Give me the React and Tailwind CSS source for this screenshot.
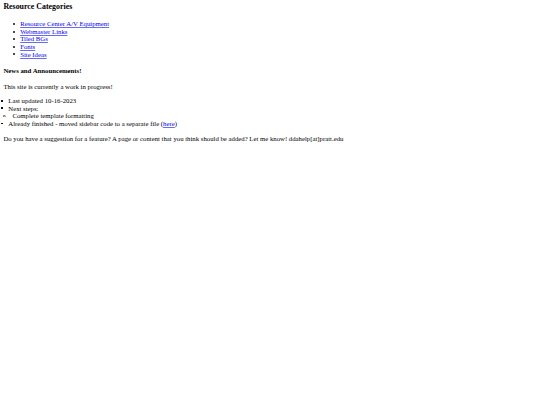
import React from "react";

const links = [
  "Resource Center A/V Equipment",
  "Webmaster Links",
  "Tiled BGs",
  "Fonts",
  "Site Ideas",
];

const Disc = () => <span className="mr-[5.2px] h-[2px] w-[2px] shrink-0 rounded-full bg-[#111]" />;
const Square = () => <span className="mr-[5.2px] h-[1.8px] w-[1.8px] shrink-0 bg-[#111]" />;
const Circle = () => (
  <svg className="mr-[6.9px] shrink-0" width="2.6" height="2.6" viewBox="0 0 24 24">
    <circle cx="12" cy="12" r="9" fill="none" stroke="#222" strokeWidth="6" />
  </svg>
);

const linkCls = "text-[#0000ee] underline decoration-[#6a6af2] decoration-[0.5px] underline-offset-[1px]";

const App = () => {
  return (
    <div className="min-h-[405px] bg-white px-[3.4px] pt-[2px] font-['Liberation_Serif',serif] text-[6.75px] leading-[7.6px] text-black">
      <h3 className="text-[7.9px] font-bold leading-[9px]">Resource Categories</h3>

      <ul className="mt-[9.2px] pl-[9.6px]">
        {links.map((link) => (
          <li key={link} className="flex items-center">
            <Disc />
            <a href="#" className={linkCls}>
              {link}
            </a>
          </li>
        ))}
      </ul>

      <h4 className="mt-[8.9px] font-bold leading-[7.8px]">News and Announcements!</h4>

      <p className="mt-[8.3px]">This site is currently a work in progress!</p>

      <ul className="mt-[6.2px] -ml-[2.1px]">
        <li className="flex items-center">
          <Square />
          <span>Last updated 10-16-2023</span>
        </li>
        <li className="flex items-center">
          <Square />
          <span>Next steps:</span>
        </li>
        <li className="flex items-center pl-[1.7px]">
          <Circle />
          <span>Complete template formatting</span>
        </li>
        <li className="flex items-center">
          <Square />
          <span>
            Already finished - moved sidebar code to a separate file (
            <a href="#" className={linkCls}>
              here
            </a>
            )
          </span>
        </li>
      </ul>

      <p className="mt-[7.6px]">
        Do you have a suggestion for a feature? A page or content that you think should be added? Let me know!
        ddahelp[at]pratt.edu
      </p>
    </div>
  );
};

export default App;
